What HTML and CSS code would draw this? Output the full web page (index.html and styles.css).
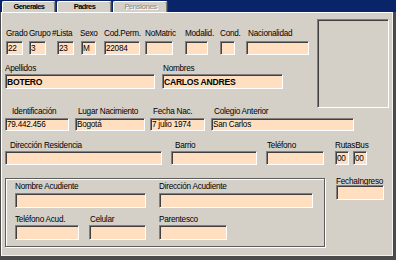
FILE: index.html
```html
<!DOCTYPE html>
<html>
<head>
<meta charset="utf-8">
<link rel="stylesheet" href="styles.css">
</head>
<body>
<div class="tabs">
  <div class="tab tab-gen">Generales</div>
  <div class="tab tab-pad">Padres</div>
  <div class="tab tab-pen disabled">Pensiones</div>
</div>
<div class="frame">
  <div class="panel">
    <div class="top">
      <div class="topleft">
        <div class="row r1">
          <div class="fld f-grado"><span class="lab">Grado</span><input class="inp" value="22"></div>
          <div class="fld f-grupo"><span class="lab">Grupo</span><input class="inp" value="3"></div>
          <div class="fld f-lista"><span class="lab">#Lista</span><input class="inp" value="23"></div>
          <div class="fld f-sexo"><span class="lab">Sexo</span><input class="inp" value="M"></div>
          <div class="fld f-cod"><span class="lab">Cod.Perm.</span><input class="inp" value="22084"></div>
          <div class="fld f-nomat"><span class="lab">NoMatric</span><input class="inp" value=""></div>
          <div class="fld f-modal"><span class="lab">Modalid.</span><input class="inp" value=""></div>
          <div class="fld f-cond"><span class="lab">Cond.</span><input class="inp" value=""></div>
          <div class="fld f-nac"><span class="lab">Nacionalidad</span><input class="inp" value=""></div>
        </div>
        <div class="row r2">
          <div class="fld f-ape"><span class="lab">Apellidos</span><input class="inp bold" value="BOTERO"></div>
          <div class="fld f-nom"><span class="lab">Nombres</span><input class="inp bold" value="CARLOS ANDRES"></div>
        </div>
      </div>
      <div class="photo"></div>
    </div>
    <div class="row r3">
      <div class="fld f-ident"><span class="lab">Identificación</span><input class="inp" value="79.442.456"></div>
      <div class="fld f-lugar"><span class="lab">Lugar Nacimiento</span><input class="inp" value="Bogotá"></div>
      <div class="fld f-fnac"><span class="lab">Fecha Nac.</span><input class="inp" value="7 julio 1974"></div>
      <div class="fld f-col"><span class="lab">Colegio Anterior</span><input class="inp" value="San Carlos"></div>
    </div>
    <div class="row r4">
      <div class="fld f-dir"><span class="lab">Dirección Residencia</span><input class="inp" value=""></div>
      <div class="fld f-barrio"><span class="lab">Barrio</span><input class="inp" value=""></div>
      <div class="fld f-tel"><span class="lab">Teléfono</span><input class="inp" value=""></div>
      <div class="fld f-rutas"><span class="lab">RutasBus</span>
        <div class="pair"><input class="inp" value="00"><input class="inp" value="00"></div>
      </div>
    </div>
    <div class="bottom">
      <div class="group">
        <div class="row g1">
          <div class="fld f-nacu"><span class="lab">Nombre Acudiente</span><input class="inp" value=""></div>
          <div class="fld f-dacu"><span class="lab">Dirección Acudiente</span><input class="inp" value=""></div>
        </div>
        <div class="row g2">
          <div class="fld f-tacu"><span class="lab">Teléfono Acud.</span><input class="inp" value=""></div>
          <div class="fld f-cel"><span class="lab">Celular</span><input class="inp" value=""></div>
          <div class="fld f-par"><span class="lab">Parentesco</span><input class="inp" value=""></div>
        </div>
      </div>
      <div class="fld f-fing"><span class="lab">FechaIngreso</span><input class="inp" value=""></div>
    </div>
  </div>
</div>
</body>
</html>
```
FILE: styles.css
```css
* { box-sizing: border-box; }
body {
  margin: 0;
  width: 396px;
  height: 260px;
  overflow: hidden;
  background: #4a4a4a;
  font-family: "Liberation Sans", Arial, sans-serif;
  font-size: 8.2px;
  letter-spacing: -0.25px;
  color: #000;
}
.tabs {
  display: flex;
  height: 12px;
  padding: 1px 0 0 2px;
  background: #0a246a;
}
.tab {
  height: 11px;
  background: #d4d0c8;
  border-top: 1px solid #fff;
  border-left: 1px solid #fff;
  border-right: 1px solid #404040;
  box-shadow: inset -1px 0 #808080;
  border-radius: 2px 3px 0 0;
  font-weight: bold;
  font-size: 7.5px;
  letter-spacing: -0.6px;
  line-height: 9px;
  text-align: center;
}
.tab-gen { width: 54px; }
.tab-pad { width: 55px; margin-left: 1px; }
.tab-pen { width: 55px; margin-left: 1px; }
.disabled { color: #a09c94; text-shadow: 1px 1px #fff; }

.frame {
  display: flex;
  height: 248px;
  padding-left: 1px;
}
.panel {
  width: 392px;
  height: 244px;
  background: #d4d0c8;
  border-top: 1px solid #fff;
  border-left: 1px solid #fff;
  border-right: 1px solid #f2f2f2;
  border-bottom: 1px solid #f2f2f2;
  padding-left: 3px;
}
.top { display: flex; align-items: flex-start; }
.topleft { width: 312px; padding-top: 16px; }
.photo {
  width: 72px;
  height: 89px;
  margin: 6px 0 -1px 0;
  border: 1px solid;
  border-color: #808080 #fff #fff #808080;
  box-shadow: inset 1px 1px #404040;
}

.row { display: flex; align-items: flex-start; --gap: 1px; --h: 14px; }
.fld { display: flex; flex-direction: column; }
.lab {
  display: block;
  height: 10px;
  line-height: 10px;
  white-space: nowrap;
  margin-bottom: var(--gap);
}
.inp {
  display: block;
  width: 100%;
  height: var(--h);
  margin: 0;
  padding: 0 0 0 1px;
  border: 1px solid;
  border-color: #808080 #fff #fff #808080;
  box-shadow: inset 1px 1px #404040;
  background: #ffdfbf;
  font: inherit;
  letter-spacing: inherit;
  color: #000;
  outline: none;
}
.bold { font-weight: bold; font-size: 8.6px; }

.r1 { --gap: 2px; --h: 14px; }
.f-grado { width: 17px; margin-left: 1px; }
.f-grupo { width: 17px; margin-left: 6px; }
.f-lista { width: 17px; margin-left: 11px; }
.f-lista .lab { margin-left: -5px; }
.f-sexo { width: 15px; margin-left: 7px; }
.f-sexo .lab { margin-left: -1px; }
.f-cod { width: 36px; margin-left: 8px; }
.f-nomat { width: 28px; margin-left: 5px; }
.f-modal { width: 23px; margin-left: 12px; }
.f-cond { width: 15px; margin-left: 12px; }
.f-nac { width: 63px; margin-left: 11px; }
.f-nac .lab { padding-left: 2px; }

.r2 { margin-top: 9px; --gap: 0px; --h: 15px; }
.f-ape { width: 150px; }
.f-nom { width: 121px; margin-left: 7px; }
.f-nom .lab { padding-left: 1px; }

.r3 { --gap: 1px; --h: 13px; }
.r3 .lab { padding-left: 3px; }
.f-ident { width: 64px; }
.r3 .f-ident .lab { padding-left: 7px; }
.f-lugar { width: 70px; margin-left: 6px; }
.f-fnac { width: 55px; margin-left: 5px; }
.f-col { width: 143px; margin-left: 6px; }

.r4 { margin-top: 10px; --gap: 0px; --h: 14px; }
.f-dir { width: 157px; }
.f-dir .lab { padding-left: 5px; }
.f-barrio { width: 86px; margin-left: 9px; }
.f-barrio .lab { padding-left: 4px; }
.f-tel { width: 58px; margin-left: 9px; }
.f-tel .lab { padding-left: 1px; }
.f-rutas { margin-left: 11px; }
.pair { display: flex; gap: 4px; }
.pair .inp { width: 14px; }

.bottom { display: flex; align-items: flex-start; margin-top: 13px; }
.group {
  width: 320px;
  height: 69px;
  border: 1px solid #5c5c5c;
  box-shadow: inset 1px 1px #fff, 1px 1px #fff;
  padding: 3px 0 0 9px;
}
.g1 { --gap: 1px; --h: 15px; }
.g2 { margin-top: 7px; --gap: 0px; --h: 15px; }
.f-nacu { width: 131px; }
.f-dacu { width: 154px; margin-left: 13px; }
.f-tacu { width: 64px; }
.f-cel { width: 57px; margin-left: 10px; }
.f-cel .lab { padding-left: 1px; }
.f-par { width: 68px; margin-left: 13px; }

.f-fing { width: 48px; margin-left: 11px; --h: 15px; --gap: 0px; }
.f-fing .lab { height: 7px; line-height: 7px; }
```
